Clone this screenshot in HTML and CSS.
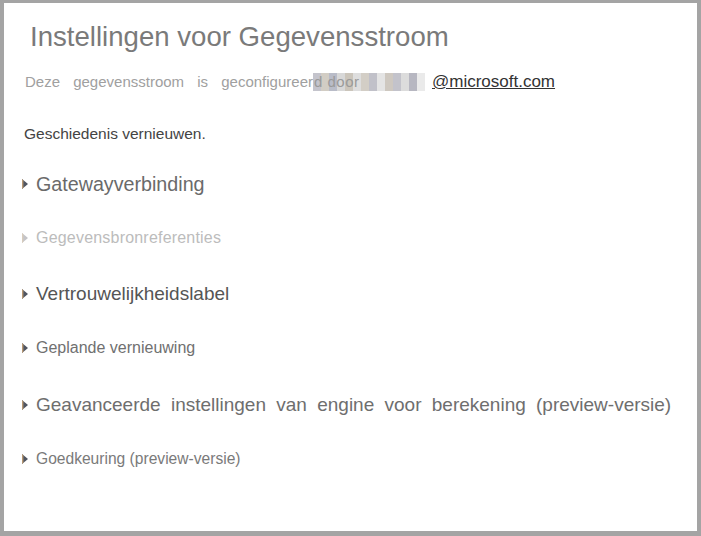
FILE: index.html
```html
<!DOCTYPE html>
<html lang="nl">
<head>
<meta charset="utf-8">
<title>Instellingen voor Gegevensstroom</title>
<link rel="stylesheet" href="styles.css">
</head>
<body>
<div class="frame">
  <h1 class="title">Instellingen voor Gegevensstroom</h1>
  <p class="owner">Deze gegevensstroom is geconfigureer<span class="blur"><span class="blur-text">d door</span></span><a class="mail" href="#">@microsoft.com</a></p>
  <p class="history">Geschiedenis vernieuwen.</p>
  <ul class="sections">
    <li class="sec big g1"><svg class="tri" width="6" height="10" viewBox="0 0 6 10"><path d="M0 0 L6 5 L0 10 Z" fill="#4f5562"/><path d="M0 0 L1.4 1.2 L1.4 8.8 L0 10 Z" fill="#b89872"/></svg><span>Gatewayverbinding</span></li>
    <li class="sec small g2"><svg class="tri" width="6" height="10" viewBox="0 0 6 10"><path d="M0 0 L6 5 L0 10 Z" fill="#c4c4c8"/><path d="M0 0 L1.4 1.2 L1.4 8.8 L0 10 Z" fill="#d8ccbc"/></svg><span>Gegevensbronreferenties</span></li>
    <li class="sec big g3"><svg class="tri" width="6" height="10" viewBox="0 0 6 10"><path d="M0 0 L6 5 L0 10 Z" fill="#4f5562"/><path d="M0 0 L1.4 1.2 L1.4 8.8 L0 10 Z" fill="#b89872"/></svg><span>Vertrouwelijkheidslabel</span></li>
    <li class="sec small g4"><svg class="tri" width="6" height="10" viewBox="0 0 6 10"><path d="M0 0 L6 5 L0 10 Z" fill="#4f5562"/><path d="M0 0 L1.4 1.2 L1.4 8.8 L0 10 Z" fill="#b89872"/></svg><span>Geplande vernieuwing</span></li>
    <li class="sec big g5 wide"><svg class="tri" width="6" height="10" viewBox="0 0 6 10"><path d="M0 0 L6 5 L0 10 Z" fill="#4f5562"/><path d="M0 0 L1.4 1.2 L1.4 8.8 L0 10 Z" fill="#b89872"/></svg><span>Geavanceerde instellingen van engine voor berekening (preview-versie)</span></li>
    <li class="sec small g6"><svg class="tri" width="6" height="10" viewBox="0 0 6 10"><path d="M0 0 L6 5 L0 10 Z" fill="#4f5562"/><path d="M0 0 L1.4 1.2 L1.4 8.8 L0 10 Z" fill="#b89872"/></svg><span>Goedkeuring (preview-versie)</span></li>
  </ul>
</div>
</body>
</html>
```

FILE: styles.css
```css
* { box-sizing: border-box; }
html, body { margin: 0; padding: 0; background: #fff; }
body { font-family: "Liberation Sans", Arial, sans-serif; }

.frame {
  width: 701px;
  height: 536px;
  border-style: solid;
  border-color: #a4a4a4;
  border-width: 3px 4px 5px 4px;
  padding: 19px 0 0 20px;
  background: #fff;
}

.title {
  margin: 0 0 0 6px;
  font-weight: normal;
  font-size: 27.6px;
  line-height: 30px;
  color: #7a7a7a;
}

.owner {
  margin: 20px 0 0 1px;
  font-size: 15px;
  line-height: 20px;
  color: #a0a0a0;
  word-spacing: 9px;
}

.blur {
  display: inline-block;
  width: 112px;
  height: 18px;
  vertical-align: -4px;
  background:
    linear-gradient(90deg,
      #c4c4cc 0 8px, #d2cdc4 8px 16px, #b9bcc8 16px 24px, #d8d8d8 24px 32px,
      #cbc5bb 32px 40px, #dedede 40px 48px, #d3cec6 48px 56px, #c1c1c9 56px 64px,
      #e4e4e4 64px 72px, #cec8c0 72px 80px, #c3c3cb 80px 88px, #dcdcdc 88px 96px,
      #b7b7c1 96px 104px, #eaeaea 104px 112px);
  color: #9a9a9a;
  font-size: 15px;
  line-height: 18px;
  word-spacing: 0;
  overflow: hidden;
}
.blur-text { padding-left: 1px; letter-spacing: 0.5px; }

.mail {
  margin-left: 7px;
  font-size: 17px;
  color: #333;
  text-decoration: underline;
  word-spacing: 0;
}

.history {
  margin: 33px 0 0 0;
  font-size: 15.5px;
  line-height: 18px;
  color: #444;
}

.sections {
  list-style: none;
  margin: 0;
  padding: 0;
}

.sec {
  display: flex;
  align-items: center;
  margin-left: -2px;
}
.sec .tri { flex: none; margin-right: 8px; }
.sec.big { font-size: 19px; line-height: 24px; }
.sec.small { font-size: 16px; line-height: 20px; }

.sec.g1 { margin-top: 29px; color: #6a6a6a; font-size: 19.7px; }
.sec.g2 { margin-top: 32px; color: #bcbcbc; letter-spacing: 0.2px; }
.sec.g3 { margin-top: 34px; color: #555; }
.sec.g4 { margin-top: 32px; color: #707070; }
.sec.g5 { margin-top: 35px; color: #6e6e6e; }
.sec.g6 { margin-top: 32px; color: #7a7a7a; font-size: 15.6px; }
.wide span { word-spacing: 5px; }
```
